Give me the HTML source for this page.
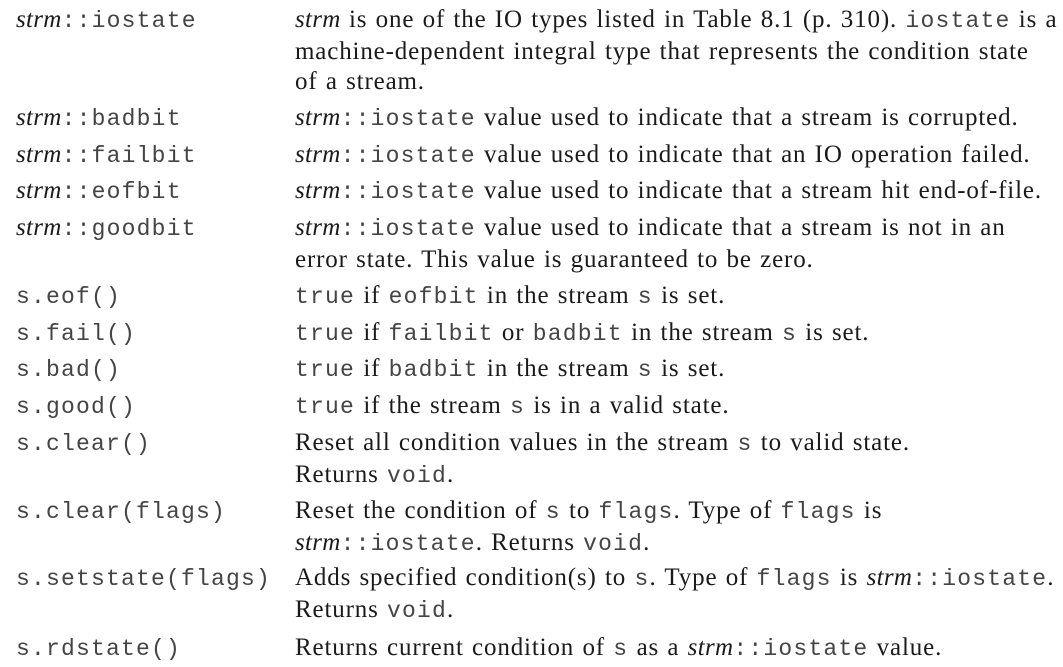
<!DOCTYPE html><html><head><style>
body{margin:0;width:1063px;height:667px;background:#fff;overflow:hidden;font-family:"Liberation Serif",serif;font-size:25px;color:#1a1a1a}
.r{position:absolute;left:0;width:1063px;line-height:30.5px}
.a{position:absolute;left:16px;white-space:nowrap;letter-spacing:0}
.b{position:absolute;left:295px;width:800px;white-space:nowrap;letter-spacing:0.85px;word-spacing:1.2px}
code{font-family:"Liberation Mono",monospace;font-size:23px;color:#444;letter-spacing:1.2px;word-spacing:0}
i{letter-spacing:0.3px}
</style></head><body>
<div class="r" style="top:5px"><div class="a"><i>strm</i><code>::iostate</code></div><div class="b"><i>strm</i> is one of the IO types listed in Table 8.1 (p. 310). <code>iostate</code> is a<br>machine-dependent integral type that represents the condition state<br>of a stream.</div></div>
<div class="r" style="top:103px"><div class="a"><i>strm</i><code>::badbit</code></div><div class="b"><i>strm</i><code>::iostate</code> value used to indicate that a stream is corrupted.</div></div>
<div class="r" style="top:140px"><div class="a"><i>strm</i><code>::failbit</code></div><div class="b"><i>strm</i><code>::iostate</code> value used to indicate that an IO operation failed.</div></div>
<div class="r" style="top:176px"><div class="a"><i>strm</i><code>::eofbit</code></div><div class="b"><i>strm</i><code>::iostate</code> value used to indicate that a stream hit end-of-file.</div></div>
<div class="r" style="top:213px"><div class="a"><i>strm</i><code>::goodbit</code></div><div class="b"><i>strm</i><code>::iostate</code> value used to indicate that a stream is not in an<br>error state. This value is guaranteed to be zero.</div></div>
<div class="r" style="top:281px"><div class="a"><code>s.eof()</code></div><div class="b"><code>true</code> if <code>eofbit</code> in the stream <code>s</code> is set.</div></div>
<div class="r" style="top:318px"><div class="a"><code>s.fail()</code></div><div class="b"><code>true</code> if <code>failbit</code> or <code>badbit</code> in the stream <code>s</code> is set.</div></div>
<div class="r" style="top:354px"><div class="a"><code>s.bad()</code></div><div class="b"><code>true</code> if <code>badbit</code> in the stream <code>s</code> is set.</div></div>
<div class="r" style="top:391px"><div class="a"><code>s.good()</code></div><div class="b"><code>true</code> if the stream <code>s</code> is in a valid state.</div></div>
<div class="r" style="top:428px"><div class="a"><code>s.clear()</code></div><div class="b">Reset all condition values in the stream <code>s</code> to valid state.<br>Returns <code>void</code>.</div></div>
<div class="r" style="top:496px"><div class="a"><code>s.clear(flags)</code></div><div class="b">Reset the condition of <code>s</code> to <code>flags</code>. Type of <code>flags</code> is<br><i>strm</i><code>::iostate</code>. Returns <code>void</code>.</div></div>
<div class="r" style="top:563px"><div class="a"><code>s.setstate(flags)</code></div><div class="b">Adds specified condition(s) to <code>s</code>. Type of <code>flags</code> is <i>strm</i><code>::iostate</code>.<br>Returns <code>void</code>.</div></div>
<div class="r" style="top:633px"><div class="a"><code>s.rdstate()</code></div><div class="b">Returns current condition of <code>s</code> as a <i>strm</i><code>::iostate</code> value.</div></div>
</body></html>
